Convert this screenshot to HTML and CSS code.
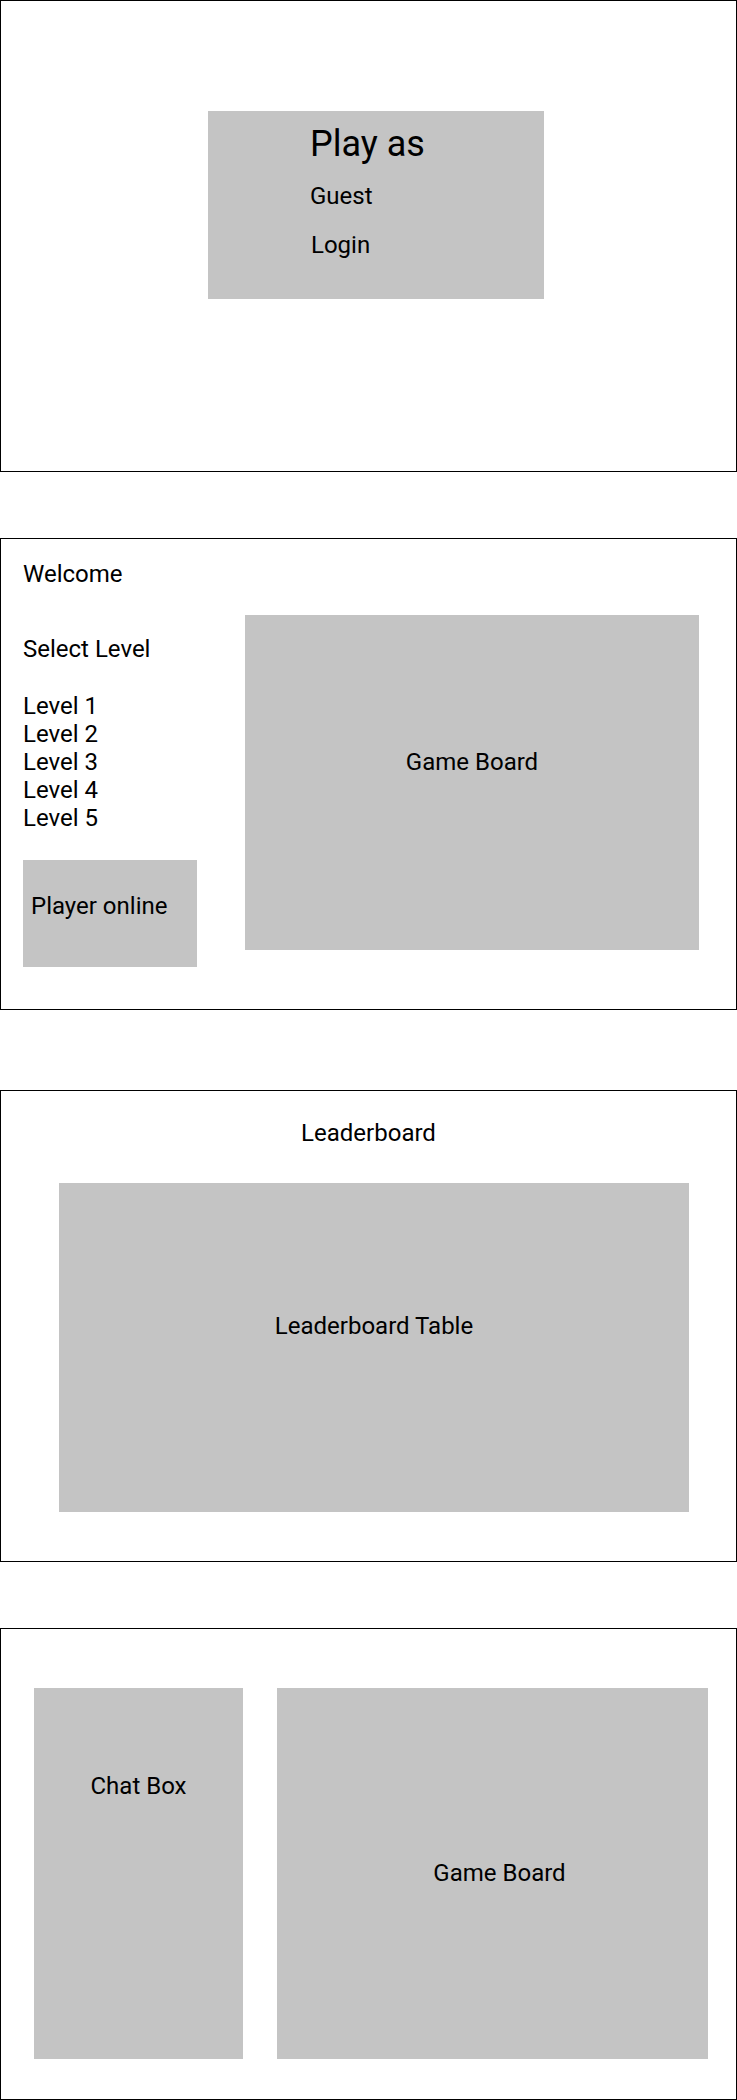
FILE: index.html
```html
<!DOCTYPE html>
<html lang="en">
<head>
  <meta charset="UTF-8" />
  <meta name="viewport" content="width=device-width, initial-scale=1" />
  <title>Game Wireframe</title>
  <link rel="stylesheet" href="styles.css">
</head>
<body>

  <!-- Start screen -->
  <div class="frame frame-start">
    <div class="play-box">
      <h1>Play as</h1>
      <p class="option">Guest</p>
      <p class="option login">Login</p>
    </div>
  </div>

  <!-- Lobby -->
  <div class="frame frame-lobby">
    <h2 class="welcome">Welcome</h2>
    <div class="lobby-row">
      <div class="side">
        <p class="select-title">Select Level</p>
        <ul class="levels">
          <li>Level 1</li>
          <li>Level 2</li>
          <li>Level 3</li>
          <li>Level 4</li>
          <li>Level 5</li>
        </ul>
        <div class="players">Player online</div>
      </div>
      <div class="board board-lobby">Game Board</div>
    </div>
  </div>

  <!-- Leaderboard -->
  <div class="frame frame-leader">
    <h2 class="leader-title">Leaderboard</h2>
    <div class="leader-table">Leaderboard Table</div>
  </div>

  <!-- Match -->
  <div class="frame frame-match">
    <div class="chat">Chat Box</div>
    <div class="board board-match">Game Board</div>
  </div>

</body>
</html>
```

FILE: styles.css
```css
body {
  margin: 0;
  padding: 0;
  font-family: Roboto, "Liberation Sans", sans-serif;
  font-size: 24px;
  line-height: 28px;
  color: #000;
  background: #fff;
}
h1, h2, p, ul {
  margin: 0;
  padding: 0;
  font-weight: 400;
}
h2 {
  font-size: 24px;
}
.frame {
  box-sizing: border-box;
  width: 737px;
  height: 472px;
  border: 1px solid #000;
}
.frame-start {
  padding-top: 110px;
  margin-bottom: 66px;
}
.frame-lobby {
  padding: 21px 0 0 22px;
  margin-bottom: 80px;
}
.frame-leader {
  padding-top: 28px;
  margin-bottom: 66px;
}
.frame-match {
  display: flex;
  gap: 34px;
  padding: 59px 0 0 33px;
}

/* start */
.play-box {
  box-sizing: border-box;
  width: 336px;
  height: 188px;
  margin-left: 207px;
  padding: 12px 0 0 102px;
  background: #c4c4c4;
}
.play-box h1 {
  font-size: 36px;
  line-height: 42px;
}
.option {
  margin-top: 17px;
}
.option.login {
  margin-top: 21px;
  padding-left: 1px;
}

/* lobby */
.lobby-row {
  display: flex;
  margin-top: 27px;
}
.side {
  width: 222px;
  padding-top: 20px;
}
.select-title {
  margin-bottom: 29px;
}
.levels {
  list-style: none;
}
.players {
  box-sizing: border-box;
  width: 174px;
  height: 107px;
  margin-top: 28px;
  padding: 32px 0 0 8px;
  background: #c4c4c4;
}
.board {
  box-sizing: border-box;
  background: #c4c4c4;
  text-align: center;
}
.board-lobby {
  width: 454px;
  height: 335px;
  padding-top: 133px;
}

/* leaderboard */
.leader-title {
  text-align: center;
}
.leader-table {
  box-sizing: border-box;
  width: 630px;
  height: 329px;
  margin: 36px 0 0 58px;
  padding-top: 129px;
  background: #c4c4c4;
  text-align: center;
}

/* match */
.chat {
  box-sizing: border-box;
  width: 209px;
  height: 371px;
  padding-top: 84px;
  background: #c4c4c4;
  text-align: center;
}
.board-match {
  width: 431px;
  height: 371px;
  padding: 171px 0 0 14px;
}
```
